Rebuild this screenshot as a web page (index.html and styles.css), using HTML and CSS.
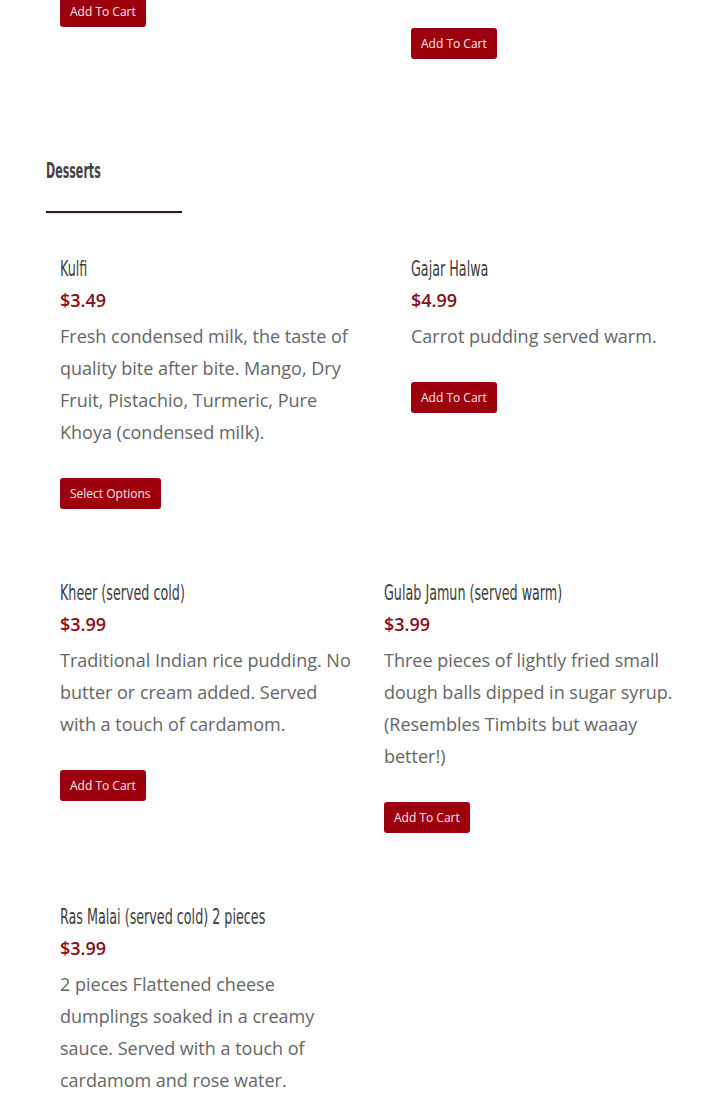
FILE: index.html
```html
<!DOCTYPE html>
<html>
<head>
<meta charset="utf-8">
<link rel="stylesheet" href="styles.css">
</head>
<body>
<div class="page">
  <div class="row row-prev">
    <div class="item item-short"><a class="btn">Add To Cart</a></div>
    <div class="item item-offset"><a class="btn">Add To Cart</a></div>
  </div>

  <div class="section-head">
    <h2><span class="narrow">Desserts</span></h2>
  </div>

  <div class="row row-a">
    <div class="item">
      <h3><span class="narrow">Kulfi</span></h3>
      <div class="price">$3.49</div>
      <p class="desc">Fresh condensed milk, the taste of quality bite after bite. Mango, Dry Fruit, Pistachio, Turmeric, Pure Khoya (condensed milk).</p>
      <a class="btn">Select Options</a>
    </div>
    <div class="item">
      <h3><span class="narrow">Gajar Halwa</span></h3>
      <div class="price">$4.99</div>
      <p class="desc">Carrot pudding served warm.</p>
      <a class="btn">Add To Cart</a>
    </div>
  </div>

  <div class="row row-b">
    <div class="item">
      <h3><span class="narrow">Kheer (served cold)</span></h3>
      <div class="price">$3.99</div>
      <p class="desc">Traditional Indian rice pudding. No butter or cream added. Served with a touch of cardamom.</p>
      <a class="btn">Add To Cart</a>
    </div>
    <div class="item">
      <h3><span class="narrow">Gulab Jamun (served warm)</span></h3>
      <div class="price">$3.99</div>
      <p class="desc">Three pieces of lightly fried small dough balls dipped in sugar syrup. (Resembles Timbits but waaay better!)</p>
      <a class="btn">Add To Cart</a>
    </div>
  </div>

  <div class="row row-a">
    <div class="item">
      <h3><span class="narrow">Ras Malai (served cold) 2 pieces</span></h3>
      <div class="price">$3.99</div>
      <p class="desc">2 pieces Flattened cheese dumplings soaked in a creamy sauce. Served with a touch of cardamom and rose water.</p>
      <a class="btn">Add To Cart</a>
    </div>
  </div>
</div>
</body>
</html>
```

FILE: styles.css
```css
html, body {
  margin: 0;
  padding: 0;
  background: #fff;
}
.page {
  padding: 0 20px 0 46px;
  font-family: "Open Sans", "Liberation Sans", sans-serif;
  color: #666;
}
.row {
  display: grid;
  align-items: start;
}
.row-a { grid-template-columns: 351px 1fr; }
.row-b { grid-template-columns: 324px 1fr; }
.row-prev {
  grid-template-columns: 351px 1fr;
  margin-top: -4px;
}
.item {
  padding: 0 14px 69px;
}
.row-a > .item:first-child { padding-right: 36px; }
.row-b > .item:first-child { padding-right: 14px; }
.item-offset {
  padding-top: 32px;
}
.row-prev .item { padding-bottom: 0; }
.section-head {
  margin-top: 96px;
  margin-bottom: 41px;
}
.section-head h2 {
  display: block;
  margin: 0;
  width: 136px;
  font-family: "DejaVu Sans Condensed", "DejaVu Sans", sans-serif;
  font-weight: bold;
  font-size: 20.5px;
  line-height: 32px;
  color: #444;
  padding-bottom: 24px;
  border-bottom: 2px solid #2a1a1e;
  box-shadow: 0 2px 2px -1px #f6dde2;
}
.narrow {
  display: inline-block;
  transform: scaleX(0.69);
  transform-origin: left center;
  white-space: nowrap;
}
.section-head .narrow {
  transform: scaleX(0.6);
}
h3 {
  margin: 0;
  font-family: "DejaVu Sans Condensed", "DejaVu Sans", sans-serif;
  font-weight: normal;
  font-size: 20.5px;
  line-height: 30px;
  color: #3d3d3d;
}
.price {
  font-weight: 600;
  font-size: 18px;
  line-height: 32px;
  color: #8a0c18;
}
.desc {
  margin: 4px 0 30px;
  font-size: 18px;
  line-height: 32px;
  color: #666;
}
.btn {
  display: inline-block;
  background: #9c000d;
  color: #fbe9ea;
  font-size: 12px;
  line-height: 31px;
  height: 31px;
  padding: 0 10px;
  border-radius: 3px;
  text-decoration: none;
}
```
